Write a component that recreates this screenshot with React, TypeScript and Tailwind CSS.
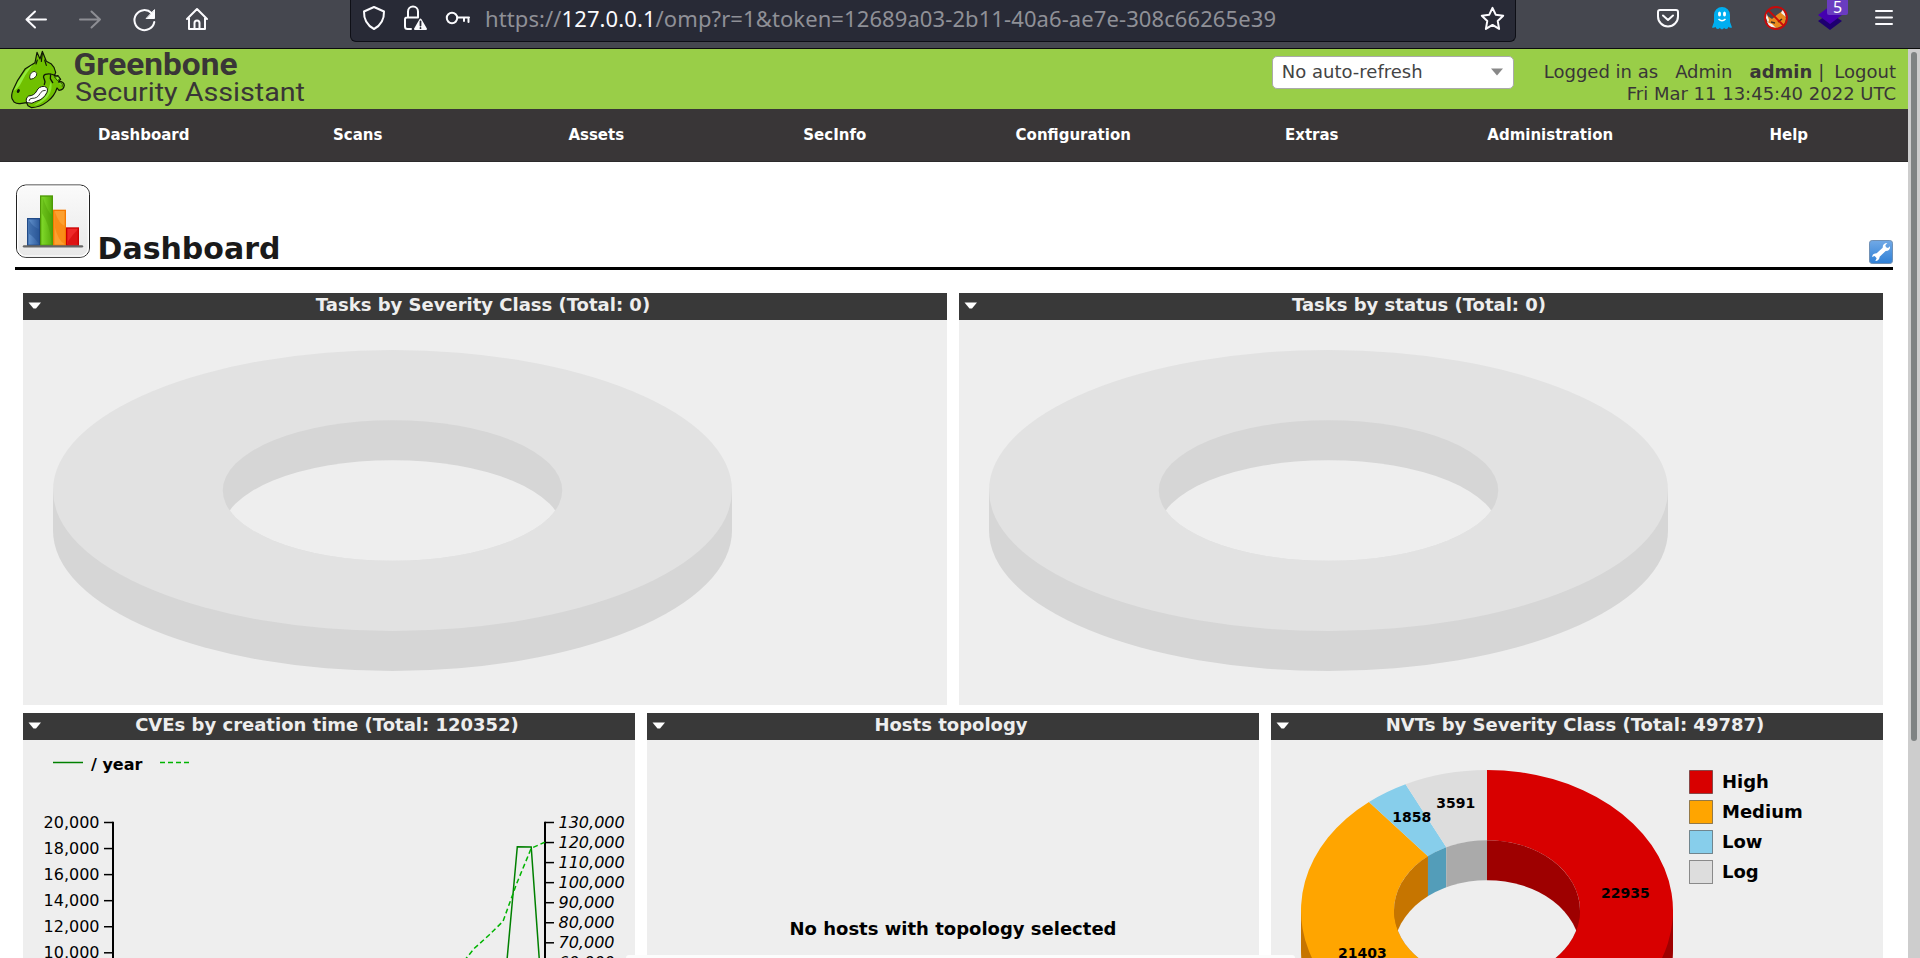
import React from "react";

const NAV = ["Dashboard", "Scans", "Assets", "SecInfo", "Configuration", "Extras", "Administration", "Help"];

function Toolbar() {
  return (
    <div className="flex h-[49px] w-full shrink-0 border-b border-[#0c0c0d] bg-[#45474f]">
      <div className="flex w-[350px] shrink-0 items-start">
        <svg width="350" height="48" viewBox="0 0 350 48" fill="none" stroke="#fbfbfe" strokeWidth="2" strokeLinecap="round" strokeLinejoin="round">
          <path d="M46 19.5H26.5M35 11.500l-8.500 8 8.500 8" />
          <path d="M80 19.5h20M91.500 11.500l8.500 8-8.500 8" stroke="#8d8e94" />
          <path d="M151.500 13a10 10 0 1 0 2.800 9" />
          <path d="M154.500 10v8.500h-8z" fill="#fbfbfe" strokeWidth="1" />
          <path d="M187 19l10-10 10 10M189 18v11h16V18M194.500 28.500v-5.500a2.500 2.500 0 0 1 5 0v5.500" />
        </svg>
      </div>
      <div className="flex h-[42px] w-[1166px] shrink-0 rounded-b-md border-x border-b border-[#0e0f16] bg-[#282a36]">
        <svg className="shrink-0" width="134" height="41" viewBox="351 0 134 41" fill="none" stroke="#fbfbfe" strokeWidth="2" strokeLinejoin="round" strokeLinecap="round">
          <path d="M374 7l10 4.500c.3 8.500-2.500 13.500-10 17.500-7.500-4-10.300-9-10-17.500z" />
          <path d="M408 17.500v-6a5 5 0 0 1 10 0v6M411 29h-3.500a2.500 2.500 0 0 1-2.500-2.500v-7a2 2 0 0 1 2-2h10" />
          <path d="M420.500 19.500l5.500 9.500h-11z" fill="#fbfbfe" />
          <path d="M420.500 21.500v4M420.500 28v.2" stroke="#282a36" strokeWidth="1.800" />
          <circle cx="452" cy="18" r="5.200" />
          <path d="M457.500 17.500h11.500M468.500 17.500v4.500M464 17.500v3.500" />
        </svg>
        <div className="flex-1">
          <svg width="800" height="40" viewBox="0 0 800 40" className="overflow-visible font-['Noto_Sans'] text-[22px]">
            <text x="0" y="27" textLength="791" fill="#8f9097">
              https://<tspan fill="#fbfbfe">127.0.0.1</tspan>/omp?r=1&amp;token=12689a03-2b11-40a6-ae7e-308c66265e39
            </text>
          </svg>
        </div>
        <svg className="mr-[10px] mt-[6px] shrink-0" width="25" height="25" viewBox="0 0 25 25" fill="none" stroke="#fbfbfe" strokeWidth="2" strokeLinejoin="round">
          <path d="M12.500 1.800l3.200 6.900 7.500 1-5.500 5.200 1.400 8-6.600-4-6.600 4 1.400-8-5.500-5.200 7.500-1z" />
        </svg>
      </div>
      <svg className="shrink-0" width="404" height="48" viewBox="1516 0 404 48" fill="none">
        <path d="M1660 10h16a2 2 0 0 1 2 2v4.500a10 10 0 0 1-20 0v-4.500a2 2 0 0 1 2-2zM1663 15.500l5 4.500 5-4.500" stroke="#fbfbfe" strokeWidth="2" strokeLinecap="round" strokeLinejoin="round" />
        <path d="M1714 15a8 8 0 0 1 16 0v7l2 5.500c-1.500.6-2.500.3-3.500-.8-.5 2.500-3 3-4.500 1-1 2-3 2-4 0-1.500 2-4 1.500-4.500-1-1 1.100-2 1.400-3.500.8l2-5.500z" fill="#00aef0" />
        <ellipse cx="1719.500" cy="14" rx="1.500" ry="2.500" fill="#fff" />
        <ellipse cx="1724.500" cy="14" rx="1.500" ry="2.500" fill="#fff" />
        <path d="M1718.500 19q3.500 3.500 7 0" stroke="#fff" strokeWidth="1.500" />
        <path d="M1766 15l6 4 6-5 6-4 2 9-2 6-7 3-8-2z" fill="#e98a1e" />
        <path d="M1767 22l2 5 7 1-4-4zM1766 12l3 8-1 3-2-5zM1783 9l3 8-5-4z" fill="#f4f1ee" />
        <path d="M1771 22l4 1M1778 22l4-3" stroke="#3d3026" strokeWidth="1.500" />
        <circle cx="1776" cy="18" r="11" stroke="#c80a0a" strokeWidth="1.800" />
        <path d="M1768 10l16 16" stroke="#c80a0a" strokeWidth="1.800" />
        <path d="M1830 13l12 8-12 9-12-9z" fill="#1e0070" />
        <path d="M1830 6l12 9-12 9-12-9z" fill="#4500b0" />
        <path d="M1827 0h21v13a2 2 0 0 1-2 2h-17a2 2 0 0 1-2-2z" fill="#6a3cc0" />
        <text x="1837.500" y="12.500" textAnchor="middle" fill="#fff" className="font-['Noto_Sans'] text-[16px]">5</text>
        <path d="M1876 11h16M1876 17.500h16M1876 24h16" stroke="#fbfbfe" strokeWidth="2" strokeLinecap="round" />
      </svg>
    </div>
  );
}

function Logo() {
  return (
    <svg className="shrink-0" width="310" height="60" viewBox="0 0 310 60">
      <g transform="translate(0 -9) scale(.3333)" strokeLinejoin="round" strokeLinecap="round">
        <path d="M105 68L111 37L120 57L127 34L139 64L153 71L162 82L167 97L163 108L174 107L182 118L176 124Q192 124 193 136Q191 150 177 151L171 144Q164 168 142 185Q120 202 95 203L84 197L80 188L60 191Q50 192 42 186L36 176Q33 166 39 150L53 121L76 86Z" fill="#70c000" stroke="#101807" strokeWidth="3.500" />
        <path d="M41 152L55 123L78 90L98 74Q75 103 60 135Q50 149 41 152Z" fill="#93ea3d" />
        <path d="M153 122Q160 148 143 172Q126 192 101 197Q140 173 145 150Z" fill="#8ce630" />
        <path d="M127 40L124 64M134 60L139 76M112 60L108 72" fill="none" stroke="#101807" strokeWidth="3.500" />
        <path d="M89 110Q91 95 105 94Q113 99 109 108Q101 118 92 118Z" fill="#fff" stroke="#101807" strokeWidth="2.500" />
        <path d="M165 106Q150 99 136 103Q127 108 133 118Q137 126 133 133M152 102L151 116L158 128" fill="none" stroke="#101807" strokeWidth="4" />
        <path d="M80 188Q75 175 86 168Q103 167 110 153Q116 139 133 139Q146 143 141 157Q131 178 111 183Q96 194 80 188Z" fill="#fff" stroke="#101807" strokeWidth="3" />
        <path d="M87 182Q88 175 96 175Q112 176 120 161Q126 149 136 151" fill="none" stroke="#101807" strokeWidth="2.500" />
        <ellipse cx="55" cy="153" rx="4" ry="6" transform="rotate(30 55 153)" fill="#101807" />
        <path d="M165 111L174 109L180 117L173 121ZM175 127Q189 127 187 139" fill="#8ce630" stroke="#101807" strokeWidth="2" />
      </g>
      <text x="73.500" y="25.500" textLength="164" lengthAdjust="spacingAndGlyphs" fill="#393637" className="font-['Roboto'] text-[32px] font-bold">Greenbone</text>
      <text x="75" y="52" textLength="230" lengthAdjust="spacingAndGlyphs" fill="#393637" className="font-['Roboto'] text-[26px]">Security Assistant</text>
    </svg>
  );
}

function DashboardIcon() {
  return (
    <svg width="76" height="76" viewBox="45 69 228 228">
      <defs>
        <linearGradient id="box" x1="0" y1="0" x2="0" y2="1"><stop offset="0" stopColor="#fbfbfb" /><stop offset="1" stopColor="#e8e8e8" /></linearGradient>
        <linearGradient id="blue" x1="0" x2="1"><stop offset="0" stopColor="#6595cf" /><stop offset="1" stopColor="#2d5a9b" /></linearGradient>
        <linearGradient id="green" x1="0" x2="1"><stop offset="0" stopColor="#83dd2c" /><stop offset="1" stopColor="#58ac0c" /></linearGradient>
      </defs>
      <rect x="49.500" y="75" width="219" height="217" rx="28" fill="url(#box)" stroke="#222" strokeWidth="3" />
      <rect x="53" y="78.500" width="212" height="210" rx="25" fill="none" stroke="#fff" strokeWidth="4" />
      <rect x="83" y="176" width="36" height="80" fill="url(#blue)" stroke="#204a87" strokeWidth="4" />
      <path d="M87 181q14 22 30 26v45q-15-22-30-31z" fill="#244f91" opacity=".45" />
      <rect x="122" y="108" width="35" height="148" fill="url(#green)" stroke="#4e9a06" strokeWidth="4" />
      <path d="M128 112q15 45 27 52v88q-6-60-29-92z" fill="#489500" opacity=".35" />
      <rect x="161" y="151" width="35" height="105" fill="#fca02f" stroke="#f57900" strokeWidth="4" />
      <path d="M165 157q12 35 29 41v55q-20-13-29-50z" fill="#f57900" opacity=".5" />
      <rect x="200" y="204" width="35" height="52" fill="#ef2929" stroke="#cc0000" strokeWidth="4" />
      <path d="M204 244q16-22 30-36v45h-30z" fill="#cc0000" opacity=".5" />
      <path d="M72 259h174" stroke="#666" strokeWidth="7" strokeLinecap="round" />
    </svg>
  );
}

type PanelProps = { title: string; children: React.ReactNode; className: string };

function Panel({ title, children, className }: PanelProps) {
  return (
    <section className={className}>
      <header className="flex h-[27px] items-start bg-[#393939]">
        <svg className="ml-[5px] mt-[9px] shrink-0" width="14" height="8" viewBox="0 0 14 8">
          <path d="M.5.5h12.500l-5 6h-2.500z" fill="#fff" />
        </svg>
        <h2 className="mr-[23px] flex-1 text-center text-[18px] font-bold leading-6 text-[#eee]">{title}</h2>
      </header>
      <div className="h-[385px] bg-[#eee]">{children}</div>
    </section>
  );
}

const CY = 170.5;
const RY = 140.5;
const DEPTH = 40;

function EmptyDonut() {
  return (
    <svg width="924" height="385" viewBox="0 0 924 385">
      <path d="M30 170.500V210.500A339.500 140.500 0 0 0 709 210.500V170.500Z" fill="#d6d6d6" />
      <ellipse cx="369.500" cy={CY} rx="339.500" ry={RY} fill="#e2e2e2" />
      <clipPath id="hole"><ellipse cx="369.500" cy={CY} rx="169.750" ry="70.250" /></clipPath>
      <g clipPath="url(#hole)">
        <rect x="199" y="99" width="341" height="143" fill="#d6d6d6" />
        <ellipse cx="369.500" cy={CY + DEPTH} rx="169.750" ry="70.250" fill="#eee" />
      </g>
    </svg>
  );
}

const SLICES = [
  { label: "High", value: 22935, color: "#d80000", dark: "#9e0000" },
  { label: "Medium", value: 21403, color: "#ffa500", dark: "#c67500" },
  { label: "Low", value: 1858, color: "#87ceeb", dark: "#539db9" },
  { label: "Log", value: 3591, color: "#dddddd", dark: "#aaaaaa" },
];

function SeverityDonut() {
  const cx = 216;
  const rx = 186;
  const total = SLICES.reduce((sum, s) => sum + s.value, 0);
  const point = (a: number, k: number) => `${cx + rx * k * Math.sin(a)} ${CY - RY * k * Math.cos(a)}`;
  let acc = 0;
  const arcs = SLICES.map((s) => {
    const a = (acc / total) * 2 * Math.PI;
    acc += s.value;
    const b = (acc / total) * 2 * Math.PI;
    const left = s.label === "High" ? cx : s.label === "Medium" ? cx - rx / 2 : cx + (rx / 2) * Math.sin(a);
    const right = s.label === "High" ? cx + rx / 2 : cx + (rx / 2) * Math.sin(b);
    return { ...s, a, b, mid: (a + b) / 2, left, right };
  });
  return (
    <svg width="612" height="385" viewBox="0 0 612 385">
      <path d="M216 170.500H402V210.500A186 140.500 0 0 1 216 351Z" fill="#9e0000" />
      <path d="M216 170.500H30V210.500A186 140.500 0 0 0 216 351Z" fill="#c67500" />
      {arcs.map((s) => (
        <path key={s.label} fill={s.color} d={`M${point(s.a, 1)}A${rx} ${RY} 0 0 1 ${point(s.b, 1)}L${point(s.b, 0.5)}A${rx / 2} ${RY / 2} 0 0 0 ${point(s.a, 0.5)}Z`} />
      ))}
      <clipPath id="nvthole"><ellipse cx={cx} cy={CY} rx={rx / 2} ry={RY / 2} /></clipPath>
      <g clipPath="url(#nvthole)">
        {arcs.map((s) => (
          <rect key={s.label} x={s.left} y="99" width={s.right - s.left} height="143" fill={s.dark} />
        ))}
        <ellipse cx={cx} cy={CY + DEPTH} rx={rx / 2} ry={RY / 2} fill="#eee" />
      </g>
      <g className="text-[14px] font-bold" textAnchor="middle">
        {arcs.map((s) => (
          <text key={s.label} x={cx + rx * 0.75 * Math.sin(s.mid)} y={CY - RY * 0.75 * Math.cos(s.mid)}>{s.value}</text>
        ))}
      </g>
      {SLICES.map((s, i) => (
        <g key={s.label}>
          <rect x="418.500" y={30.5 + i * 30} width="23" height="23" fill={s.color} stroke="#000" strokeOpacity=".4" />
          <text x="451" y={48 + i * 30} className="text-[18px] font-bold">{s.label}</text>
        </g>
      ))}
    </svg>
  );
}

const LEFT_TICKS = ["20,000", "18,000", "16,000", "14,000", "12,000", "10,000"];
const RIGHT_TICKS = ["130,000", "120,000", "110,000", "100,000", "90,000", "80,000", "70,000", "60,000"];

function CveChart() {
  return (
    <svg width="612" height="385" viewBox="23 740 612 385">
      <path d="M53 762.500h30" stroke="#008000" strokeWidth="1.500" />
      <path d="M160 762.500h30" stroke="#00b400" strokeWidth="1.500" strokeDasharray="5 3" />
      <text x="91" y="769.500" className="text-[16px] font-bold">/ year</text>
      <path d="M113 821.800V1100M545 821.800V1100" fill="none" stroke="#000" strokeWidth="2" />
      <g stroke="#000" strokeWidth="1.500">
        {LEFT_TICKS.map((t, i) => <path key={t} d={`M104 ${822.5 + i * 26.06}h9`} />)}
        {RIGHT_TICKS.map((t, i) => <path key={t} d={`M545 ${822.5 + i * 20.05}h9`} />)}
      </g>
      <g className="text-[16px]" textAnchor="end">
        {LEFT_TICKS.map((t, i) => <text key={t} x="99.500" y={827.8 + i * 26.06}>{t}</text>)}
      </g>
      <g className="text-[16px] italic">
        {RIGHT_TICKS.map((t, i) => <text key={t} x="558.500" y={827.8 + i * 20.05}>{t}</text>)}
      </g>
      <path d="M503.500 1025L507.200 958L517.300 846.700L531.200 847L539.200 958L542 1000" fill="none" stroke="#008000" strokeWidth="1.500" />
      <path d="M459 967L474.400 948.300L489.100 935L503 921.300L516.900 883L531.200 848.300L544.700 842.300" fill="none" stroke="#00b400" strokeWidth="1.500" strokeDasharray="5 3" />
    </svg>
  );
}

export default function App() {
  return (
    <div className="relative flex h-[958px] w-[1920px] flex-col overflow-hidden bg-white font-['DejaVu_Sans',sans-serif] text-black">
      <Toolbar />
      <div className="flex min-h-0 flex-1">
        <main className="w-[1908px] shrink-0 overflow-hidden">
          <div className="flex h-[60px] justify-between bg-[#99ce48] text-[#393637]">
            <Logo />
            <div className="flex pr-3">
              <div className="mr-[30px] mt-[7px] flex h-[33px] w-[242px] items-start justify-between rounded-[5px] border border-[#aaa] bg-white pl-[9px] pr-[10px] text-[18px] leading-[30px] text-[#444]">
                <span>No auto-refresh</span>
                <svg className="mt-[11px]" width="12" height="8" viewBox="0 0 12 8"><path d="M0 .5h12l-6 7z" fill="#888" /></svg>
              </div>
              <div className="pt-3 text-right text-[18px] leading-[22px]">
                <div className="flex justify-end whitespace-pre">
                  <span>Logged in as</span>
                  <span className="ml-[17px]">Admin</span>
                  <b className="ml-[17px]">admin</b>
                  <span className="ml-[6px]">|</span>
                  <span className="ml-[10px]">Logout</span>
                </div>
                <div>Fri Mar 11 13:45:40 2022 UTC</div>
              </div>
            </div>
          </div>
          <nav className="grid h-[53px] grid-cols-8 border-b border-[#2c2a2b] bg-[#393637] text-center text-[15px] font-bold leading-[53px] text-white">
            {NAV.map((n, i) => <a key={n} className={i === 0 ? "pl-[49px]" : ""}>{n}</a>)}
          </nav>
          <div className="ml-[15px] mr-[15px] flex h-[108px] items-end justify-between border-b-[3px] border-black">
            <div className="flex items-end">
              <div className="mb-[8px]"><DashboardIcon /></div>
              <h1 className="ml-[6.5px] text-[30px] font-bold leading-[36px] text-[#1a1a1a]">Dashboard</h1>
            </div>
            <svg className="mb-[3px]" width="24" height="24" viewBox="0 0 72 72">
              <defs><linearGradient id="wr" x1="0" y1="0" x2="0" y2="1"><stop offset="0" stopColor="#71a9e6" /><stop offset="1" stopColor="#2f80d6" /></linearGradient></defs>
              <rect x="1.500" y="1.500" width="69" height="69" rx="8" fill="url(#wr)" stroke="#7191b5" strokeWidth="3" />
              <path d="M55 9L49 16L51 22L57 24L63 19Q64 32 50 33L32 50Q31 62 19 63L23 55L17 48L9 51Q10 41 23 40L41 23Q41 9 55 9Z" fill="#fff" />
            </svg>
          </div>
          <div className="ml-[23px] mt-[23px] flex gap-3">
            <Panel className="w-[924px]" title="Tasks by Severity Class (Total: 0)"><EmptyDonut /></Panel>
            <Panel className="w-[924px]" title="Tasks by status (Total: 0)"><EmptyDonut /></Panel>
          </div>
          <div className="ml-[23px] mt-2 flex gap-3">
            <Panel className="w-[612px]" title="CVEs by creation time (Total: 120352)"><CveChart /></Panel>
            <Panel className="w-[612px]" title="Hosts topology">
              <p className="pt-[177px] text-center text-[18px] font-bold leading-6">No hosts with topology selected</p>
            </Panel>
            <Panel className="w-[612px]" title="NVTs by Severity Class (Total: 49787)"><SeverityDonut /></Panel>
          </div>
        </main>
        <div className="w-3 shrink-0 bg-[#cdcdcd] pl-[3px] pt-[3px]">
          <div className="h-[689px] w-[6px] rounded-full bg-[#7f8383]" />
        </div>
      </div>
      <div className="absolute bottom-0 left-[626px] h-[3px] w-[669px] rounded-t-[4px] bg-[#fcfcfc]" />
    </div>
  );
}
